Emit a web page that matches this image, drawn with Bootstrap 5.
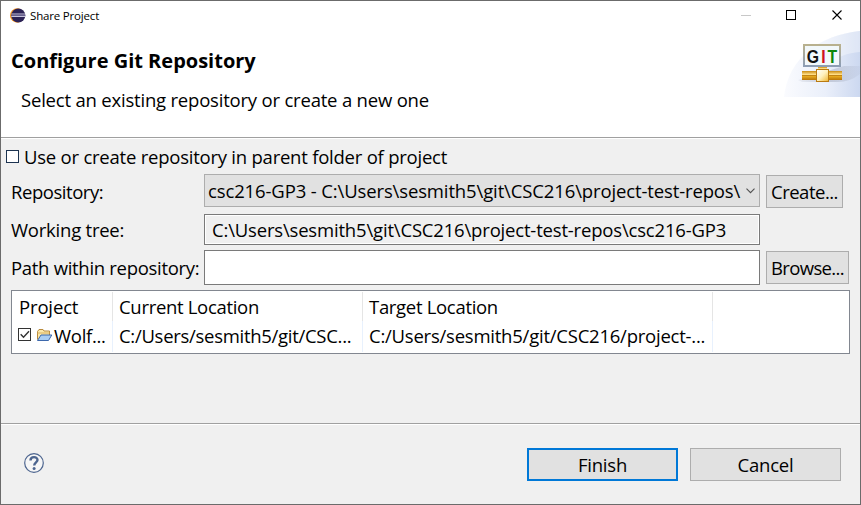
<!DOCTYPE html>
<html lang="en">
<head>
<meta charset="utf-8">
<title>Share Project</title>
<link href="https://cdn.jsdelivr.net/npm/bootstrap@5.3.0/dist/css/bootstrap.min.css" rel="stylesheet">
<style>
body{font-family:"Open Sans","Noto Sans",sans-serif;font-size:18.5px;line-height:28px;color:#000;background:#f0f0f0}
.dialog{width:861px;height:505px;border:1px solid #6b6b6b;background:#f0f0f0;white-space:nowrap}
.head-area{height:138px;background:#fff;border-bottom:1px solid #fff;box-shadow:inset 0 -1px #a0a0a0}
.titlebar{height:29px;padding-left:9px;font-size:11.5px;line-height:29px}
.titlebar .caption{margin-left:4px;letter-spacing:-.18px}
.banner{height:68px;padding-left:10px}
.banner h1{font-size:20px;line-height:28px;font-weight:700;margin:17px 0 0}
.banner p{margin:11px 0 0 10px;letter-spacing:-.2px}
.parent-row{height:35px;padding-left:5px;gap:5px;letter-spacing:-.23px}
.tick{width:13px;height:13px;border:1px solid #1c3350;background:#fff;flex:none}
.form-grid{display:grid;grid-template-columns:193px 556px auto;grid-template-rows:40px 36px 35px;align-items:start;padding-left:10px}
.lbl-repo{line-height:36px;letter-spacing:-.45px}
.lbl-tree{line-height:31px;letter-spacing:-.23px}
.lbl-path{line-height:35px;letter-spacing:-.3px}
.field{border:1px solid #7a7a7a;background:#fff}
.combo{height:33px;border:1px solid #adadad;background:#e1e1e1;padding:0 4px 0 3px;letter-spacing:-.13px}
.tree-field{height:31px;background:#f0f0f0;box-shadow:inset 0 0 0 1px #fff;padding-left:7px;line-height:30px;letter-spacing:-.18px}
.path-field{height:35px}
.push{display:block;border:1px solid #adadad;background:#e1e1e1;border-radius:0;height:33px;padding:0;font-size:inherit;line-height:32px;color:#000;letter-spacing:-.2px}
.beside{margin:1px 0 0 6px}
.create{width:77px;letter-spacing:-.5px}
.browse{width:83px;letter-spacing:-.65px}
.push.default{border:2px solid #0078d7;line-height:30px}
.push.wide{width:151px}
.projects{display:grid;grid-template-columns:101px 250px 350px 1fr;grid-template-rows:29px 31px;width:839px;height:64px;margin:5px 0 0 10px;border:1px solid #828790;background:#fff;padding:1px 0;line-height:30px;letter-spacing:-.31px}
.projects>div{border-right:1px solid #e5e5e5;padding-left:6px;overflow:hidden}
.projects>.first{padding-left:7px;letter-spacing:-.15px}
.projects>.cell{border-color:#e8f1fd;letter-spacing:-.29px}
.projects>.target{letter-spacing:-.23px}
.projects>.last{border:0}
.projects svg{flex:none}
.foot{height:81px;border-top:1px solid #a0a0a0;box-shadow:inset 0 1px #fff;padding:24px 19px 0 23px}
.help{margin-top:5px}
</style>
<script src="https://cdn.jsdelivr.net/npm/bootstrap@5.3.0/dist/js/bootstrap.bundle.min.js"></script>
</head>
<body class="m-0 overflow-hidden">
<div class="dialog d-flex flex-column">
  <header class="head-area">
    <div class="titlebar d-flex align-items-center">
      <svg width="16" height="16" viewBox="0 0 16 16"><circle cx="7.2" cy="7.5" r="7.2" fill="#f7941e"/><circle cx="8.3" cy="7.5" r="7" fill="#2c2255"/><path d="M1.5 6h13.6M1.3 8.500h14" stroke="#c9c5dd" stroke-width="1.2"/><path d="M1.300 7.250h14" stroke="#7d77a3" stroke-width="1"/></svg>
      <span class="caption">Share Project</span>
      <svg class="ms-auto" width="120" height="29" fill="none" shape-rendering="crispEdges"><path d="M1 14.5h10" stroke="#c8c8c8"/><rect x="46.5" y="9.5" width="9" height="9" stroke="#000"/><path d="M92.5 9.5l9 9M101.500 9.500l-9 9" stroke="#000" shape-rendering="auto" stroke-width="1.1"/></svg>
    </div>
    <div class="banner d-flex justify-content-between">
      <div><h1>Configure Git Repository</h1><p>Select an existing repository or create a new one</p></div>
      <svg width="76" height="68" viewBox="0 0 76 68">
        <defs>
          <linearGradient id="sky"><stop offset="0" stop-color="#fafbfe"/><stop offset=".55" stop-color="#eaeffa"/><stop offset="1" stop-color="#ccd8f0"/></linearGradient>
          <linearGradient id="pipe" x2="0" y2="1"><stop offset="0" stop-color="#c98a10"/><stop offset=".4" stop-color="#ffe08a"/><stop offset=".6" stop-color="#e7a91e"/><stop offset="1" stop-color="#b77408"/></linearGradient>
          <linearGradient id="joint" x2="1" y2="1"><stop offset="0" stop-color="#fff"/><stop offset=".5" stop-color="#fff0bd"/><stop offset="1" stop-color="#efb52e"/></linearGradient>
          <linearGradient id="rim" x2="0" y2="1"><stop offset="0" stop-color="#b9b18e"/><stop offset="1" stop-color="#8d9db4"/></linearGradient>
          <linearGradient id="shade"><stop offset="0" stop-color="#8b93a8" stop-opacity=".1"/><stop offset=".5" stop-color="#8b93a8" stop-opacity=".4"/><stop offset="1" stop-color="#8b93a8" stop-opacity=".08"/></linearGradient>
        </defs>
        <path d="M0 67C4 28 36 5 76 1v66z" fill="url(#sky)"/>
        <path d="M46 33C52 27 64 23 76 22V1C55 3 42 9 30 16z" fill="#fff" opacity=".35"/>
        <path d="M14 50L60 36h16v8Q66 52 54 52H18z" fill="url(#shade)"/>
        <g transform="translate(1 0)">
          <rect x="19" y="15" width="36" height="21" fill="#f2f8fb" stroke="url(#rim)" stroke-width="2"/>
          <text x="21.800" y="32.500" textLength="32.500" lengthAdjust="spacingAndGlyphs" letter-spacing="2.500" font-family="Liberation Sans,sans-serif" font-weight="700" font-size="19" fill="#111">G<tspan fill="#d01020">I</tspan><tspan fill="#0b870b">T</tspan></text>
          <rect x="33" y="37" width="9" height="4" fill="url(#pipe)"/>
          <path d="M17 41h40v9H17z" fill="url(#pipe)"/>
          <path d="M17 45.500h40" stroke="#c18413"/>
          <rect x="31.500" y="39.500" width="12" height="12" fill="url(#joint)" stroke="#b97a12"/>
        </g>
      </svg>
    </div>
  </header>
  <main class="flex-grow-1">
    <div class="parent-row d-flex align-items-center"><span class="tick"></span><span>Use or create repository in parent folder of project</span></div>
    <div class="form-grid">
      <span class="lbl-repo">Repository:</span>
      <div class="combo d-flex align-items-center justify-content-between"><span>csc216-GP3 - C:\Users\sesmith5\git\CSC216\project-test-repos\</span><svg width="9" height="6" fill="none" stroke="#505050" stroke-width="1.1"><path d="M.5.7l4 4 4-4"/></svg></div>
      <button class="btn push beside create">Create...</button>
      <span class="lbl-tree">Working tree:</span>
      <div class="field tree-field">C:\Users\sesmith5\git\CSC216\project-test-repos\csc216-GP3</div>
      <div></div>
      <span class="lbl-path">Path within repository:</span>
      <div class="field path-field"></div>
      <button class="btn push beside browse">Browse...</button>
    </div>
    <div class="projects">
      <div class="first">Project</div><div>Current Location</div><div>Target Location</div><div class="last"></div>
      <div class="cell d-flex">
        <svg width="36" height="30" viewBox="0 0 36 30" fill="none">
          <rect x=".5" y="7.500" width="12" height="12" fill="#fff" stroke="#333"/><path d="M2.700 13.200l2.800 3 5.500-6" stroke="#333" stroke-width="1.400"/>
          <path d="M19.500 18.500v-8l1.500-2h4l1 1.500h5.500v4" fill="#fbe7a8" stroke="#b98a3c"/><path d="M19.500 12h12" stroke="#d9b263"/>
          <path d="M19.500 19.500l3.500-5.500h10.800l-3.300 5.500z" fill="#a9cdf3" stroke="#3d68ac"/>
        </svg><span>Wolf...</span></div>
      <div class="cell">C:/Users/sesmith5/git/CSC...</div><div class="cell target">C:/Users/sesmith5/git/CSC216/project-...</div><div class="cell last"></div>
    </div>
  </main>
  <footer class="foot d-flex">
    <svg width="20" height="20" class="help" viewBox="0 0 20 20" fill="none" stroke="#4d658f"><circle cx="10" cy="10" r="9.300" fill="#f6f6f6" stroke-width="1.200"/><path d="M6.500 7.400C6.500 3 13.600 3.200 13.500 7c0 2.200-3.300 2.500-3.300 5.400" stroke-width="2.400"/><circle cx="10.100" cy="15.400" r="1.500" fill="#4d658f" stroke="none"/></svg>
    <div class="d-flex ms-auto gap-2"><button class="btn push default wide me-1">Finish</button><button class="btn push wide">Cancel</button></div>
  </footer>
</div>
</body>
</html>
